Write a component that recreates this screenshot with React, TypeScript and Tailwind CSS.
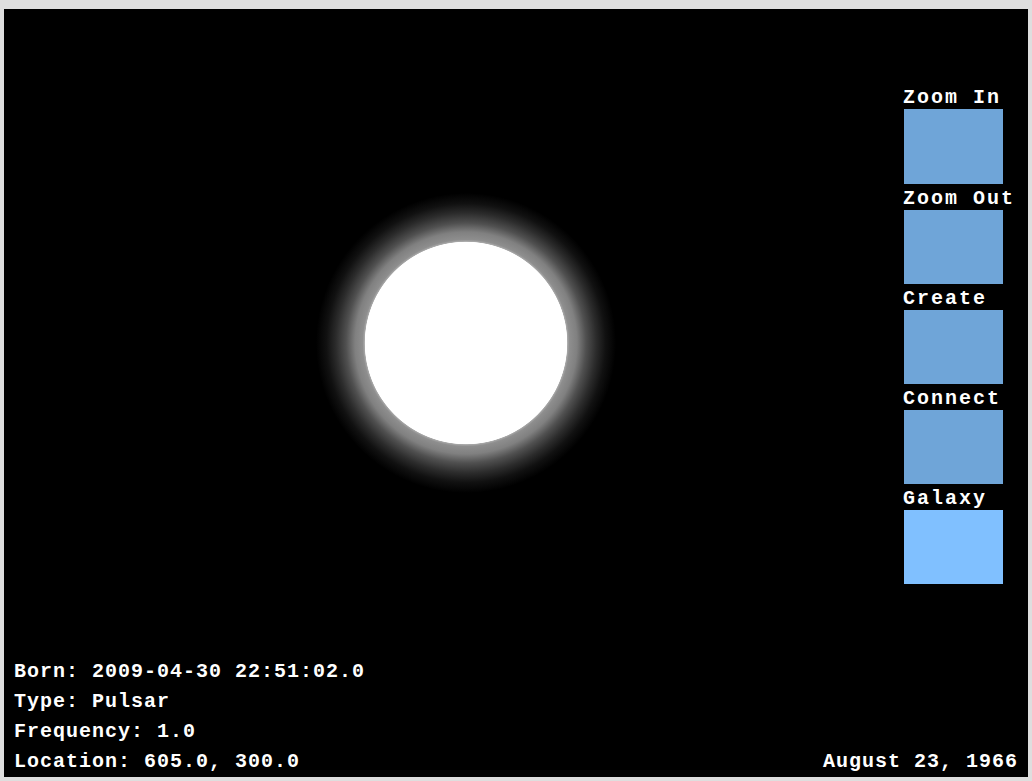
import React from "react";

const tools = [
  { label: "Zoom In", active: false },
  { label: "Zoom Out", active: false },
  { label: "Create", active: false },
  { label: "Connect", active: false },
  { label: "Galaxy", active: true },
];

const info = [
  "Born: 2009-04-30 22:51:02.0",
  "Type: Pulsar",
  "Frequency: 1.0",
  "Location: 605.0, 300.0",
];

function Star() {
  return (
    <svg width="300" height="300" viewBox="0 0 300 300" className="absolute left-[312px] top-[184px]">
      <defs>
        <radialGradient id="glow" cx="150" cy="150" r="150" gradientUnits="userSpaceOnUse">
          <stop offset="0" stopColor="#ffffff" />
          <stop offset="0.672" stopColor="#ffffff" />
          <stop offset="0.677" stopColor="#a8a8a8" />
          <stop offset="0.69" stopColor="#8e8e8e" />
          <stop offset="0.74" stopColor="#808080" />
          <stop offset="0.765" stopColor="#6c6c6c" />
          <stop offset="0.8" stopColor="#505050" />
          <stop offset="0.867" stopColor="#2c2c2c" />
          <stop offset="0.93" stopColor="#111111" />
          <stop offset="1" stopColor="#000000" />
        </radialGradient>
      </defs>
      <circle cx="150" cy="150" r="150" fill="url(#glow)" />
      <circle cx="150" cy="150" r="101" fill="#ffffff" />
    </svg>
  );
}

export default function App() {
  return (
    <div className="w-[1032px] h-[781px] bg-[#dedede] pl-[4px] pt-[9px] font-['Liberation_Mono',monospace] font-bold text-white">
      <div className="relative w-[1024px] h-[768px] bg-black flex flex-col">
        <Star />
        <div className="flex justify-end pt-[75px] pr-[25px]">
          <div className="flex flex-col w-[99px]">
            {tools.map((t, i) => (
              <div key={t.label} className="flex flex-col">
                <div className={`h-[25px] leading-[25px] text-[20px] tracking-[2px] whitespace-nowrap -ml-[1px] ${i === 0 ? "pt-[1px]" : "pt-[2px]"}`}>{t.label}</div>
                <div className={`w-[99px] ${i === 0 ? "h-[75px]" : "h-[74px] mt-[1px]"} ${t.active ? "bg-[#80c0ff]" : "bg-[#6fa5d8]"}`}></div>
              </div>
            ))}
          </div>
        </div>
        <div className="mt-auto flex items-end justify-between pl-[10px] pr-[10px] text-[20px] tracking-[1px] leading-[30px]">
          <div className="flex flex-col">
            {info.map((line) => (
              <div key={line} className="whitespace-pre">{line}</div>
            ))}
          </div>
          <div className="whitespace-pre">August 23, 1966</div>
        </div>
      </div>
    </div>
  );
}
